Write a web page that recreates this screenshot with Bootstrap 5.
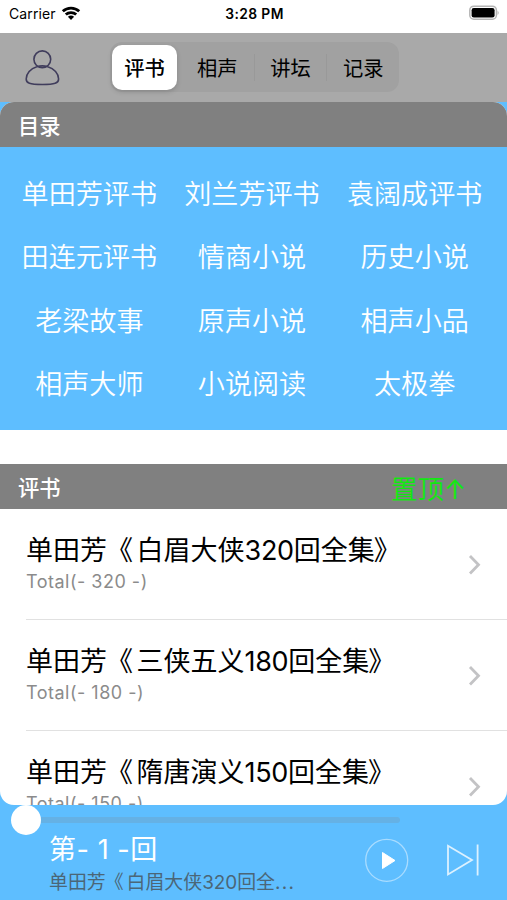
<!DOCTYPE html>
<html lang="zh-CN">
<head>
<meta charset="utf-8">
<meta name="viewport" content="width=device-width, initial-scale=1">
<title>评书</title>
<link rel="stylesheet" href="https://cdn.jsdelivr.net/npm/bootstrap@5.3.0/dist/css/bootstrap.min.css">
<style>
  body { font-family: Inter, "Noto Sans CJK SC", sans-serif; background: #5ebeff; color: #000; width: 507px; height: 900px; overflow: hidden; }
  .status-bar { height: 33px; background: #fff; font-size: 14px; line-height: 20px; padding: 4px 7px 0 9px; }
  .status-side { flex: 1 1 0; }
  .carrier { letter-spacing: .1px; }
  .clock { font-size: 13.8px; letter-spacing: .4px; margin-right: 0; }
  .top-nav { height: 69px; background: #a9a9a9; padding: 9px 0 0 24px; }
  .user-icon { margin: 6px 49px 0 0; }
  .segments { width: 289px; height: 50px; background: #a1a1a1; border-radius: 12px; padding: 3px 0 2px; }
  .segment { flex: 1 1 0; font-size: 20.3px; line-height: 48px; height: 45px; text-align: center; }
  .segment + .segment + .segment::before { content: ""; float: left; width: 1px; height: 27px; margin-top: 9px; background: #999; }
  .segment.active { flex: 0 0 65px; margin: 0 4px 0 2px; background: #fff; border-radius: 10px; font-weight: 500; box-shadow: 0 2px 5px rgba(0,0,0,.16); }
  .content-pane { height: 703px; background: #fff; border-radius: 14px; overflow: hidden; }
  .section-head { height: 45px; background: #808080; color: #fff; font-size: 21.3px; font-weight: 500; line-height: 49px; padding-left: 18px; padding-right: 41px; }
  .pin-top { color: #13e713; font-size: 26.5px; font-weight: 400; line-height: 51px; }
  .catalog { height: 283px; background: #5ebeff; color: #fff; padding: 14px 11px 0 8px; font-size: 27.1px; font-weight: 350; font-family: "Noto Sans CJK SC", sans-serif; margin-bottom: 34px; }
  .catalog .col-4 { height: 63.4px; line-height: 63.4px; text-align: center; white-space: nowrap; }
  .story { height: 111px; margin-left: 26px; padding: 23px 26px 0 0; border-bottom: 1px solid #e1e1e1; }
  .story-title { font-size: 27px; line-height: 38px; white-space: nowrap; }
  .open-mark { margin-left: -1px; margin-right: 3.5px; }
  .story-title .digits { letter-spacing: -.3px; }
  .close-mark { margin-left: -1px; }
  .story-total { font-size: 18px; line-height: 24px; color: #8b8b8b; letter-spacing: .5px; }
  .chevron { margin-top: 22px; }
  .player { height: 95px; }
  .seek { height: 30px; padding-left: 11px; }
  .seek-thumb { width: 30px; height: 30px; background: #fff; border-radius: 50%; }
  .seek-track { width: 359px; height: 6px; background: #65b1e5; border-radius: 0 3px 3px 0; }
  .now { width: 314px; padding-left: 49px; }
  .episode { color: #fff; font-size: 27px; line-height: 30px; letter-spacing: .55px; white-space: pre; }
  .book { color: #4b6677; font-size: 18.9px; line-height: 28px; margin-top: 4px; white-space: nowrap; }
  .book .open-mark { margin-right: 3px; }
  .book .dots { letter-spacing: 1.3px; }
</style>
<script src="https://cdn.jsdelivr.net/npm/bootstrap@5.3.0/dist/js/bootstrap.bundle.min.js"></script>
</head>
<body>
<header class="status-bar d-flex align-items-start">
  <div class="status-side d-flex align-items-center">
    <span class="carrier">Carrier</span>
    <svg style="margin:-2px 0 0 5px" width="20" height="16" viewBox="0 0 20 16" fill="none" stroke="#000" stroke-width="2.8"><path d="M1.8 6.3a12 12 0 0 1 16.4 0M4.8 9.6a7.6 7.6 0 0 1 10.4 0"/><path d="M6.9 11.8a4.6 4.6 0 0 1 6.2 0L10 15z" fill="#000" stroke="none"/></svg>
  </div>
  <strong class="clock fw-semibold">3:28 PM</strong>
  <div class="status-side d-flex justify-content-end">
    <svg width="31" height="16" viewBox="0 0 31 16"><rect x=".8" y="2.2" width="26.6" height="13" rx="4" fill="#fff" stroke="#b5b5b5" stroke-width="1.5"/><rect x="2.6" y="4" width="23" height="9.5" rx="2.2"/><path d="M28.6 6.4q2 2.3 0 4.6z" fill="#aaa"/></svg>
  </div>
</header>
<nav class="top-nav d-flex align-items-start">
  <svg class="user-icon flex-shrink-0" width="37" height="40" viewBox="0 0 37 40" fill="none" stroke="#403d5c" stroke-width="1.6"><circle cx="18.3" cy="11.3" r="8.4"/><path d="M12.8 18.7C6.5 20.4 2.2 25.6 2.2 30.9c0 4.2 3.2 5.6 16 5.6s16.4-1.4 16.4-5.6c0-5.3-4.5-10.5-10.8-12.2q-5.5-1.7-11 0"/></svg>
  <div class="segments d-flex">
    <div class="segment active">评书</div>
    <div class="segment">相声</div>
    <div class="segment">讲坛</div>
    <div class="segment">记录</div>
  </div>
</nav>
<main class="content-pane">
  <div class="section-head">目录</div>
  <div class="catalog">
    <div class="row g-0">
      <div class="col-4">单田芳评书</div><div class="col-4">刘兰芳评书</div><div class="col-4">袁阔成评书</div>
      <div class="col-4">田连元评书</div><div class="col-4">情商小说</div><div class="col-4">历史小说</div>
      <div class="col-4">老梁故事</div><div class="col-4">原声小说</div><div class="col-4">相声小品</div>
      <div class="col-4">相声大师</div><div class="col-4">小说阅读</div><div class="col-4">太极拳</div>
    </div>
  </div>
  <div class="section-head d-flex justify-content-between"><span>评书</span><span class="pin-top">置顶↑</span></div>
  <div class="story d-flex justify-content-between align-items-start">
    <div><div class="story-title">单田芳<span class="open-mark">《</span>白眉大侠<span class="digits">320</span>回全集<span class="close-mark">》</span></div><div class="story-total">Total(- 320 -)</div></div>
    <svg class="chevron" width="13" height="22" viewBox="0 0 13 22" fill="none" stroke="#c3c3c5" stroke-width="2.8"><path d="M2 2l8.5 8.7L2 19.5"/></svg>
  </div>
  <div class="story d-flex justify-content-between align-items-start">
    <div><div class="story-title">单田芳<span class="open-mark">《</span>三侠五义<span class="digits">180</span>回全集<span class="close-mark">》</span></div><div class="story-total">Total(- 180 -)</div></div>
    <svg class="chevron" width="13" height="22" viewBox="0 0 13 22" fill="none" stroke="#c3c3c5" stroke-width="2.8"><path d="M2 2l8.5 8.7L2 19.5"/></svg>
  </div>
  <div class="story d-flex justify-content-between align-items-start">
    <div><div class="story-title">单田芳<span class="open-mark">《</span>隋唐演义<span class="digits">150</span>回全集<span class="close-mark">》</span></div><div class="story-total">Total(- 150 -)</div></div>
    <svg class="chevron" width="13" height="22" viewBox="0 0 13 22" fill="none" stroke="#c3c3c5" stroke-width="2.8"><path d="M2 2l8.5 8.7L2 19.5"/></svg>
  </div>
</main>
<footer class="player">
  <div class="seek d-flex align-items-center"><div class="seek-thumb"></div><div class="seek-track"></div></div>
  <div class="d-flex align-items-start">
    <div class="now"><div class="episode">第- 1 -回</div><div class="book">单田芳<span class="open-mark">《</span>白眉大侠320回全<span class="dots">...</span></div></div>
    <svg style="margin:3px 0 0 50px" width="45" height="45" viewBox="0 0 45 45"><circle cx="22.7" cy="22.3" r="21" fill="none" stroke="#a9dcff" stroke-width="1.3"/><path d="M18.5 14.5l12.5 8-12.5 8z" fill="#fff" stroke="#fff" stroke-width="1" stroke-linejoin="round"/></svg>
    <svg style="margin:8px 0 0 37px" width="34" height="34" viewBox="0 0 34 34" fill="none" stroke="#dcf1ff" stroke-width="1.8"><path d="M2 2.8v28.6l24-14.3zM31.6 1.5v31"/></svg>
  </div>
</footer>
</body>
</html>
